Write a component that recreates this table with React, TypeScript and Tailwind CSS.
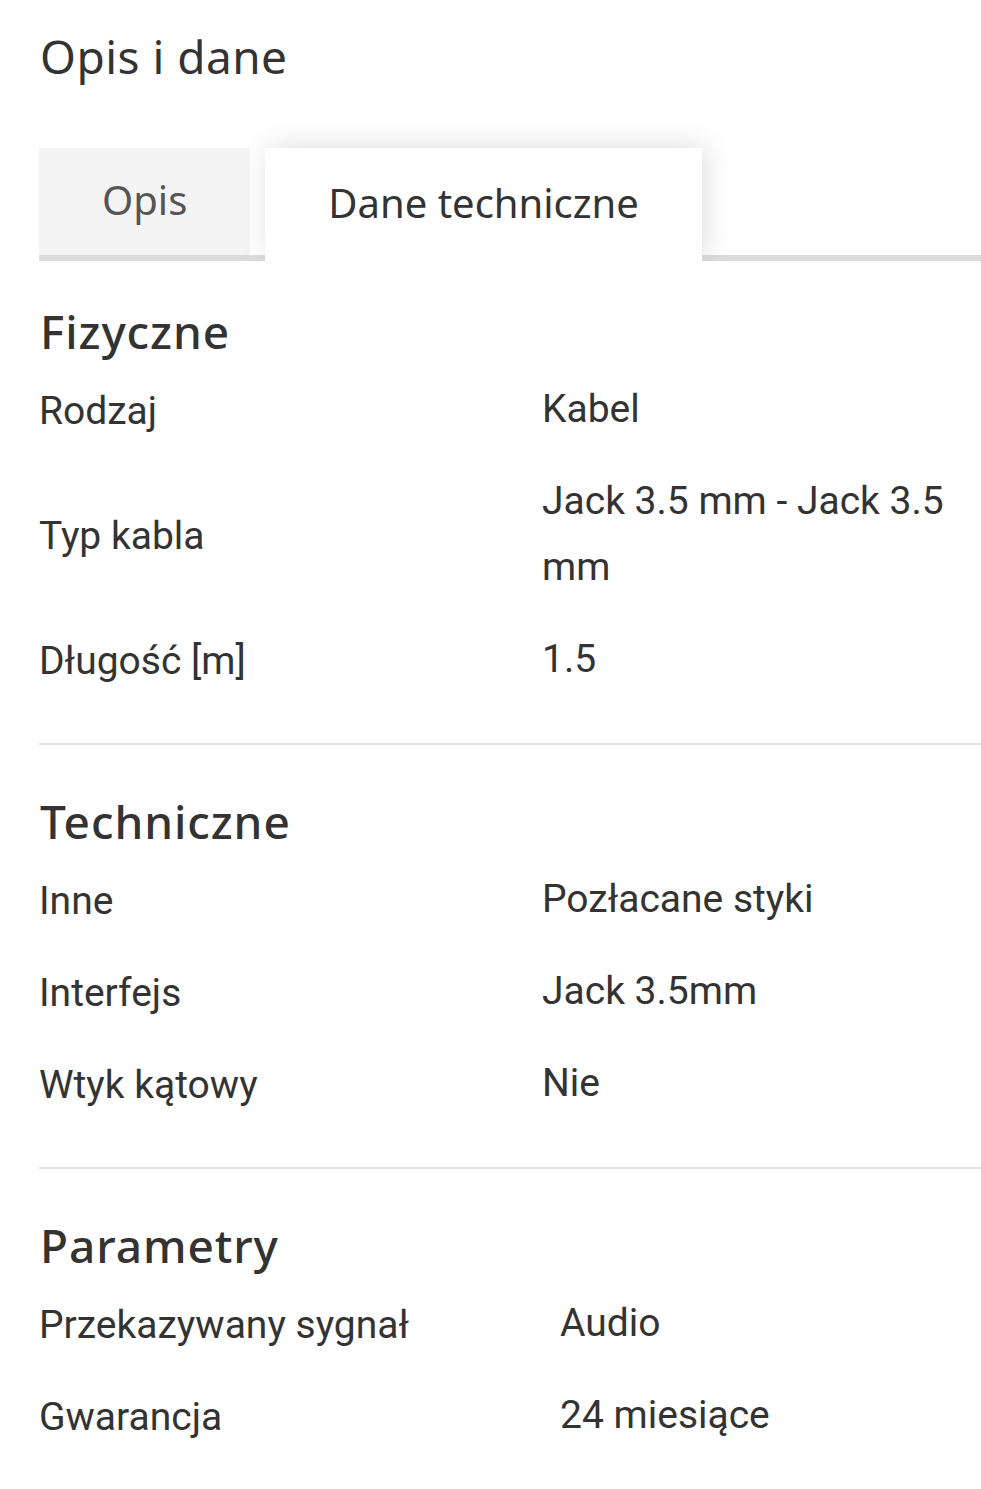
import { useState } from 'react';

type Row = { label: string; value: string };

const sections: { id: number; title: string; labelWidth: string; rows: Row[] }[] = [
  {
    id: 1,
    title: 'Fizyczne',
    labelWidth: 'grid-cols-[503px_1fr]',
    rows: [
      { label: 'Rodzaj', value: 'Kabel' },
      { label: 'Typ kabla', value: 'Jack 3.5 mm - Jack 3.5 mm' },
      { label: 'Długość [m]', value: '1.5' },
    ],
  },
  {
    id: 2,
    title: 'Techniczne',
    labelWidth: 'grid-cols-[503px_1fr]',
    rows: [
      { label: 'Inne', value: 'Pozłacane styki' },
      { label: 'Interfejs', value: 'Jack 3.5mm' },
      { label: 'Wtyk kątowy', value: 'Nie' },
    ],
  },
  {
    id: 3,
    title: 'Parametry',
    labelWidth: 'grid-cols-[521px_1fr]',
    rows: [
      { label: 'Przekazywany sygnał', value: 'Audio' },
      { label: 'Gwarancja', value: '24 miesiące' },
    ],
  },
];

const tabs = ['Opis', 'Dane techniczne'];

const App = () => {
  const [active, setActive] = useState(1);

  return (
    <div className="min-h-screen bg-white pl-[39px] font-['Roboto',sans-serif] text-[#333]">
      <h2 className="pt-[26px] pl-px font-['Noto_Sans',sans-serif] text-[46px] leading-[60px] font-normal tracking-[0.01em] text-[#333]">
        Opis i dane
      </h2>

      <div className="mt-[62px] flex items-start gap-[15px] border-b-[6px] border-[#dcdcdc]">
        {tabs.map((tab, i) => {
          const isActive = i === active;
          return (
            <button
              key={tab}
              onClick={() => setActive(i)}
              className={`flex items-center justify-center px-[63px] pb-[3px] font-['Noto_Sans',sans-serif] text-[40px] ${
                isActive
                  ? 'relative z-10 -mb-[6px] h-[113px] bg-white text-[#333] shadow-[4px_-2px_26px_rgba(0,0,0,0.13)]'
                  : 'h-[107px] bg-[#f4f4f4] text-[#555]'
              }`}
            >
              {tab}
            </button>
          );
        })}
      </div>

      <div className="relative z-20 bg-white">
        {sections.map((section, si) => (
          <div key={section.id} className={si > 0 ? 'border-t-2 border-[#e2e2e2]' : ''}>
            <h3
              className={`pl-px font-['Noto_Sans',sans-serif] text-[46px] leading-[60px] font-medium tracking-[0.02em] text-[#333] ${
                si === 0 ? 'pt-[40px]' : 'pt-[46px]'
              }`}
            >
              {section.title}
            </h3>
            <div className="mt-[2px] pb-[38px]">
              {section.rows.map((row) => (
                <div key={row.label} className={`grid ${section.labelWidth} items-center py-[13px]`}>
                  <div className="pt-[4px] text-[39px] leading-[50px]">{row.label}</div>
                  <div className="pr-[30px] text-[39px] leading-[66px]">{row.value}</div>
                </div>
              ))}
            </div>
          </div>
        ))}
      </div>
    </div>
  );
};

export default App;
